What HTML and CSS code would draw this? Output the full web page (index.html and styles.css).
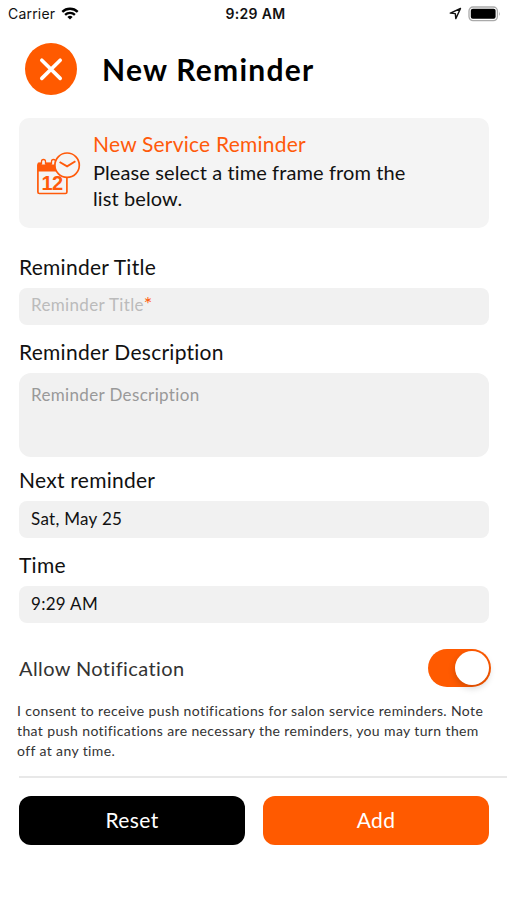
FILE: index.html
```html
<!DOCTYPE html>
<html lang="en">
<head>
    <meta charset="UTF-8">
    <meta name="viewport" content="width=device-width, initial-scale=1.0">
    <title>New Reminder</title>
    <link rel="stylesheet" href="styles.css">
</head>
<body>
    <div class="status-bar">
        <div class="status-left">
            <span class="carrier">Carrier</span>
            <svg class="wifi" width="18" height="13" viewBox="0 0 18 13" fill="none" stroke="#000" stroke-width="2.3">
                <path d="M1.3 4.9a11 11 0 0 1 15.4 0"/>
                <path d="M4.1 7.9a7 7 0 0 1 9.8 0"/>
                <path d="M9 12.6L6.4 10a3.7 3.7 0 0 1 5.2 0z" fill="#000" stroke="none"/>
            </svg>
        </div>
        <div class="status-time">9:29 AM</div>
        <div class="status-right">
            <svg width="13" height="13" viewBox="0 0 13 13" fill="none" stroke="#111" stroke-width="1.4" stroke-linejoin="round">
                <path d="M11.5 1.5L1.3 6.1l5 .5.5 5z"/>
            </svg>
            <svg width="33" height="16" viewBox="0 0 33 16">
                <rect x="1" y="1" width="28.4" height="13.6" rx="4" fill="#fff" stroke="#aaa" stroke-width="1.3"/>
                <rect x="2.8" y="2.8" width="24.8" height="10" rx="2" fill="#000"/>
                <path d="M31 5.5q1.6 2.3 0 4.6z" fill="#aaa"/>
            </svg>
        </div>
    </div>

    <header class="header">
        <button type="button" class="close-btn" aria-label="Close">
            <svg width="52" height="52" viewBox="0 0 52 52" stroke="#fff" stroke-width="3.6" stroke-linecap="round">
                <path d="M16.8 17.2L35.2 35.4M35.2 17.2L16.8 35.4"/>
            </svg>
        </button>
        <h1>New Reminder</h1>
    </header>

    <div class="info-card">
        <svg class="info-icon" width="45" height="45" viewBox="0 0 45 45" fill="none" stroke="#ff5a0a" stroke-width="1.7">
            <rect x="1.9" y="11.5" width="29" height="30" rx="1.5"/>
            <path d="M1.9 10.5h29v9h-29z" fill="#ff5a0a" stroke="none"/>
            <path d="M5.5 12.5v-3a2 2 0 0 1 4 0v3M15.5 12.5v-3a2 2 0 0 1 4 0v3" fill="#f4f4f4" stroke-width="1.3"/>
            <text class="icon-day" x="16.1" y="38" text-anchor="middle">12</text>
            <circle cx="31.1" cy="13.2" r="12.2" fill="#f4f4f4"/>
            <path d="M23.6 10l7.5 4.4 8.3-5.2" stroke-width="1.9"/>
        </svg>
        <div class="info-text">
            <div class="info-title">New Service Reminder</div>
            <p>Please select a time frame from the<br>list below.</p>
        </div>
    </div>

    <form id="reminderForm">
        <div class="form-group">
            <div class="label">Reminder Title</div>
            <div class="field placeholder">Reminder Title<span class="required">*</span></div>
        </div>
        <div class="form-group">
            <label class="label" for="description">Reminder Description</label>
            <textarea class="field" id="description" name="description" placeholder="Reminder Description"></textarea>
        </div>
        <div class="form-group">
            <label class="label" for="date">Next reminder</label>
            <input class="field" type="text" id="date" name="date" value="Sat, May 25">
        </div>
        <div class="form-group">
            <label class="label" for="time">Time</label>
            <input class="field" type="text" id="time" name="time" value="9:29 AM">
        </div>

        <div class="notify">
            <span class="notify-label">Allow Notification</span>
            <span class="switch"><span class="knob"></span></span>
        </div>
        <p class="consent">
            I consent to receive push notifications for salon service reminders. Note<br>
            that push notifications are necessary the reminders, you may turn them<br>
            off at any time.
        </p>

        <div class="actions">
            <button type="reset" class="btn btn-reset">Reset</button>
            <button type="button" class="btn btn-add">Add</button>
        </div>
    </form>
</body>
</html>
```

FILE: styles.css
```css
* {
    box-sizing: border-box;
}
body {
    font-family: Lato, "Liberation Sans", sans-serif;
    margin: 0;
    padding: 0;
    background: #fff;
    color: #111;
}
.status-bar {
    display: grid;
    grid-template-columns: 1fr auto 1fr;
    align-items: center;
    height: 27px;
    padding: 0 6px 0 8px;
    font-family: Inter, "Liberation Sans", sans-serif;
    font-size: 14px;
}
.carrier {
    letter-spacing: 0.2px;
}
.status-left,
.status-right {
    display: flex;
    align-items: center;
    gap: 6px;
}
.status-right {
    justify-content: flex-end;
}
.status-time {
    padding-left: 2px;
    font-weight: 600;
    letter-spacing: 0.3px;
}
.header {
    display: flex;
    align-items: center;
    height: 83px;
    padding-left: 25px;
    gap: 25px;
}
.close-btn {
    width: 52px;
    height: 52px;
    padding: 0;
    border: none;
    border-radius: 50%;
    background: #ff5a00;
}
.close-btn svg {
    display: block;
}
h1 {
    margin: 0;
    font-size: 30px;
    font-weight: 700;
    letter-spacing: 1.25px;
    color: #000;
}
.info-card {
    display: flex;
    height: 110px;
    margin: 8px 18px 0 19px;
    padding: 12px 0 0 17px;
    border-radius: 10px;
    background: #f4f4f4;
    font-size: 20px;
    line-height: 27px;
}
.info-icon {
    margin: 22px 12px 0 0;
}
.icon-day {
    font-family: "Liberation Sans", sans-serif;
    font-size: 20px;
    font-weight: bold;
    letter-spacing: -0.5px;
    fill: #ff5a0a;
    stroke: none;
}
.info-title {
    font-size: 21px;
    color: #ff5a0a;
    letter-spacing: 0.22px;
}
.info-text p {
    margin: 2px 0 0;
    line-height: 26px;
    letter-spacing: 0.1px;
}
form {
    padding-top: 24px;
}
.form-group {
    margin: 0 18px 0 19px;
}
.label {
    display: block;
    height: 36px;
    font-size: 21px;
    line-height: 29px;
    letter-spacing: 0.26px;
}
.field {
    display: block;
    width: 100%;
    height: 37px;
    margin-bottom: 12px;
    padding: 0 12px 2px;
    border: none;
    border-radius: 8px;
    background: #f1f1f1;
    color: #111;
    font-family: inherit;
    font-size: 17px;
    line-height: 34px;
    letter-spacing: 0.3px;
}
.placeholder {
    color: #bbb;
    letter-spacing: 0.35px;
}
.required {
    color: #ff5a0a;
    font-size: 20px;
    line-height: 20px;
}
textarea.field {
    height: 84px;
    margin-bottom: 8px;
    padding-top: 10px;
    border-radius: 12px;
    line-height: 24px;
    letter-spacing: 0.35px;
    resize: none;
}
textarea::placeholder {
    color: #999;
}
.notify {
    display: flex;
    align-items: center;
    justify-content: space-between;
    height: 38px;
    margin: 26px 16px 0 19px;
}
.notify-label {
    font-size: 20px;
    letter-spacing: 0.4px;
    color: #333;
}
.switch {
    display: flex;
    justify-content: flex-end;
    width: 63px;
    height: 38px;
    padding: 2px;
    border-radius: 19px;
    background: #ff5a00;
}
.knob {
    width: 34px;
    height: 34px;
    border-radius: 50%;
    background: #fff;
    box-shadow: 0 3px 7px rgba(0,0,0,0.18);
}
.consent {
    margin: 14px 0 15px 17px;
    font-size: 14px;
    line-height: 20px;
    letter-spacing: 0.38px;
    color: #333;
    white-space: nowrap;
}
.actions {
    display: flex;
    gap: 18px;
    margin-left: 19px;
    padding: 18px 18px 0 0;
    border-top: 2px solid #e8e8e8;
}
.btn {
    flex: 1;
    height: 49px;
    padding: 0 0 2px;
    border: none;
    border-radius: 12px;
    color: #fff;
    font-family: inherit;
    font-size: 21px;
    letter-spacing: 0.4px;
}
.btn-reset {
    background: #000;
}
.btn-add {
    background: #ff5a00;
}
```
